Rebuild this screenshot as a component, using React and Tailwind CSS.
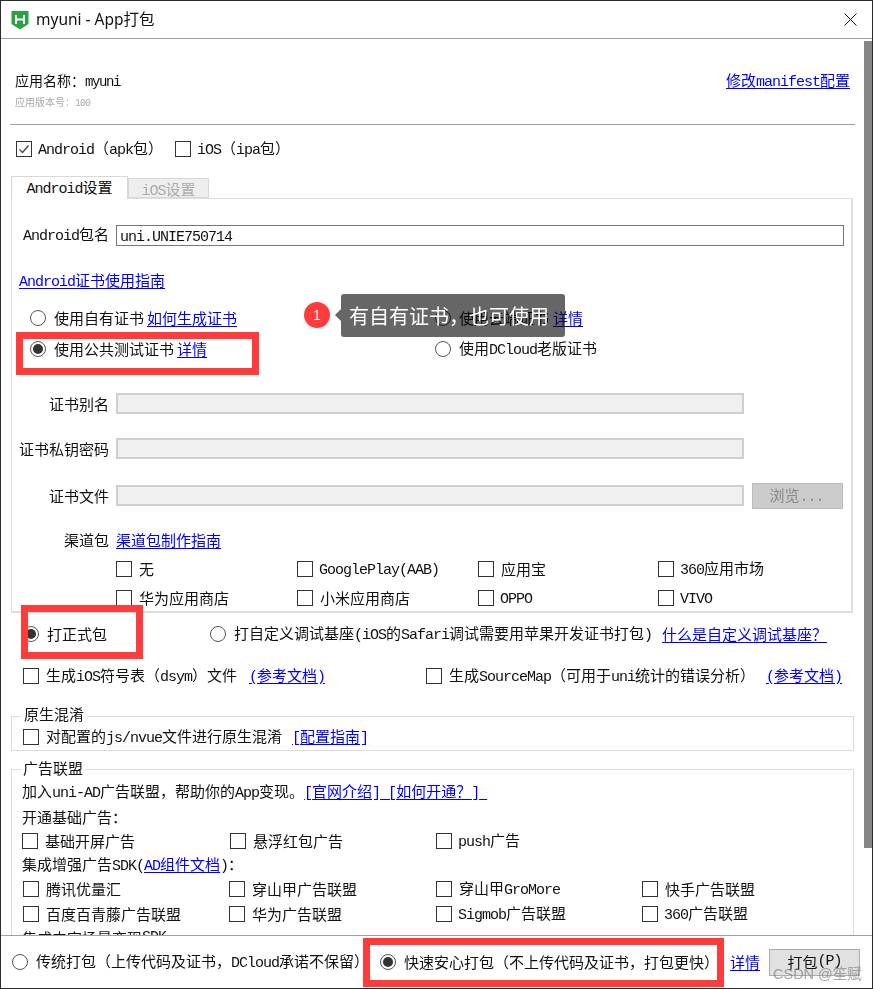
import React from "react";

function T({ children }) {
  const parts = String(children).split(/([\x20-\x7e]+)/).filter(Boolean);
  return (
    <>
      {parts.map((p, i) =>
        /^[\x20-\x7e]+$/.test(p) ? (
          <span key={i} className="font-['Liberation_Mono',monospace] text-[15px] tracking-[-1px] leading-[20px] whitespace-pre">{p}</span>
        ) : (
          <span key={i} className="font-['Noto_Sans_CJK_SC',sans-serif] text-[15px] leading-[20px] whitespace-pre">{p}</span>
        )
      )}
    </>
  );
}

function A({ children, className = "" }) {
  return <a className={"block leading-[20px] text-[#0000ff] underline underline-offset-2 whitespace-pre " + className}><T>{children}</T></a>;
}

function Check({ checked }) {
  return (
    <span className="w-4 h-4 shrink-0 border border-[#333] bg-white flex items-center justify-center">
      {checked && (
        <svg width="12" height="12" viewBox="0 0 12 12" fill="none" stroke="#444" strokeWidth="1.3">
          <path d="M1.5 6.5 L4.5 9.5 L10.5 2.5" />
        </svg>
      )}
    </span>
  );
}

function Radio({ on }) {
  return (
    <span className="w-4 h-4 shrink-0 rounded-full border-[1.5px] border-[#555] bg-white flex items-center justify-center">
      {on && <span className="w-[10px] h-[10px] rounded-full bg-[#333]" />}
    </span>
  );
}

function CheckItem({ label, width, checked, gap = "ml-[7px]" }) {
  return (
    <div className={"flex items-center h-5 " + width}>
      <Check checked={checked} />
      <span className={"leading-[20px] " + gap}><T>{label}</T></span>
    </div>
  );
}

function Label({ children }) {
  return <span className="w-[97px] mr-[7px] text-right leading-[20px]"><T>{children}</T></span>;
}

function Field({ label, mt }) {
  return (
    <div className={"flex items-center h-[21px] " + mt}>
      <Label>{label}</Label>
      <span className="w-[628px] h-[21px] bg-[#f0f0f0] border-2 border-[#cfcfcf]" />
    </div>
  );
}

export default function App() {
  return (
    <div className="relative w-[873px] h-[989px] bg-white border border-[#2a2a2a] flex flex-col overflow-hidden text-[#111]">
      <div className="h-[38px] shrink-0 border-b border-[#a0a0a0] flex items-center pl-[10px] pr-[15px]">
        <svg width="18" height="20" viewBox="0 0 18 20">
          <path d="M0.5 1 H17.5 V14 L9 19.5 L0.5 14 Z" fill="#2ba245" />
          <path d="M5 5 V14 M13 5 V14 M5 9.5 H13" stroke="#fff" strokeWidth="2" fill="none" />
        </svg>
        <span className="ml-[7px] font-['Noto_Sans','Noto_Sans_CJK_SC',sans-serif] text-[15.5px]">myuni - App打包</span>
        <svg className="ml-auto" width="13" height="13" viewBox="0 0 13 13" stroke="#111" strokeWidth="1" fill="none">
          <path d="M0.5 0.5 L12.5 12.5 M12.5 0.5 L0.5 12.5" />
        </svg>
      </div>

      <div className="relative flex-1 min-h-0 overflow-hidden">
        <div className="h-[85px] pt-[31px] pl-[14px] pr-[22px] flex justify-between items-start">
          <div>
            <div className="h-5 leading-[20px] whitespace-pre">
              <span className="font-['Noto_Sans_CJK_SC',sans-serif] text-[14px]">应用名称：</span>
              <span className="font-['Liberation_Mono',monospace] text-[14px] tracking-[-1.4px]">myuni</span>
            </div>
            <div className="mt-[2px] h-4 leading-4 text-[#aaa] whitespace-pre">
              <span className="font-['Noto_Sans_CJK_SC',sans-serif] text-[10px]">应用版本号：</span>
              <span className="font-['Liberation_Mono',monospace] text-[10px] tracking-[-1px]">100</span>
            </div>
          </div>
          <A>修改manifest配置</A>
        </div>
        <div className="h-px ml-[9px] w-[845px] bg-[#a0a0a0]" />

        <div className="h-[48px] pl-[15px] flex items-center">
          <CheckItem label="Android（apk包）" checked width="w-[159px]" gap="ml-[6px]" />
          <CheckItem label="iOS（ipa包）" gap="ml-[6px]" />
        </div>

        <div className="mt-[3px] ml-[10px] w-[843px] h-[22px] flex items-end">
          <div className="relative z-10 w-[117px] h-[23px] -mb-px border border-b-0 border-[#d8d8d8] bg-white text-center leading-[20px]"><T>Android设置</T></div>
          <div className="w-[81px] h-[20px] border border-[#d8d8d8] bg-[#eeeeee] text-center leading-[18px] text-[#aaa]"><T>iOS设置</T></div>
        </div>

        <div className="ml-[10px] w-[842px] h-[415px] border-2 border-[#dedede] border-t border-l bg-white">
          <div className="mt-[26px] flex items-center h-[21px]">
            <Label>Android包名</Label>
            <span className="w-[728px] h-[21px] border border-[#777] pl-[3px] leading-[19px]"><T>uni.UNIE750714</T></span>
          </div>
          <div className="mt-[25px] h-5 pl-[7px] flex items-center"><A>Android证书使用指南</A></div>

          <div className="mt-[17px] h-5 flex items-center">
            <div className="w-[423px] pl-[18px] flex items-center">
              <Radio />
              <span className="ml-2 leading-[20px]"><T>使用自有证书</T></span>
              <A className="ml-[3px]">如何生成证书</A>
            </div>
            <Radio />
            <span className="ml-2 leading-[20px]"><T>使用云端证书</T></span>
            <A className="ml-[4px]">详情</A>
          </div>
          <div className="mt-[11px] h-5 flex items-center">
            <div className="w-[423px] pl-[18px] flex items-center">
              <Radio on />
              <span className="ml-2 leading-[20px]"><T>使用公共测试证书</T></span>
              <A className="ml-[3px]">详情</A>
            </div>
            <Radio />
            <span className="ml-2 leading-[20px]"><T>使用DCloud老版证书</T></span>
          </div>

          <Field label="证书别名" mt="mt-[34px]" />
          <Field label="证书私钥密码" mt="mt-[24px]" />
          <div className="mt-[26px] flex items-center h-[21px]">
            <Label>证书文件</Label>
            <span className="w-[628px] h-[21px] bg-[#f0f0f0] border-2 border-[#cfcfcf]" />
            <span className="ml-2 w-[91px] h-[26px] shrink-0 bg-[#cccccc] border border-[#bbbbbb] text-[#888] flex items-center justify-center"><span className="mr-[2px]"><T>浏览...</T></span></span>
          </div>

          <div className="mt-[24px] h-5 flex items-center">
            <Label>渠道包</Label>
            <A>渠道包制作指南</A>
          </div>
          <div className="mt-[9px] pl-[104px] flex">
            <CheckItem label="无" width="w-[181px]" />
            <CheckItem label="GooglePlay(AAB)" width="w-[181px]" gap="ml-[6px]" />
            <CheckItem label="应用宝" width="w-[180px]" />
            <CheckItem label="360应用市场" gap="ml-[6px]" />
          </div>
          <div className="mt-[9px] pl-[104px] flex">
            <CheckItem label="华为应用商店" width="w-[181px]" />
            <CheckItem label="小米应用商店" width="w-[181px]" />
            <CheckItem label="OPPO" width="w-[180px]" gap="ml-[6px]" />
            <CheckItem label="VIVO" gap="ml-[6px]" />
          </div>
        </div>

        <div className="mt-[11px] h-5 pl-[22px] flex items-center">
          <div className="w-[187px] flex items-center">
            <Radio on />
            <span className="ml-2 leading-[20px]"><T>打正式包</T></span>
          </div>
          <Radio />
          <span className="ml-2 w-[428px] leading-[20px]"><T>打自定义调试基座(iOS的Safari调试需要用苹果开发证书打包)</T></span>
          <A>什么是自定义调试基座？</A>
        </div>

        <div className="mt-[22px] h-5 pl-[22px] flex items-center">
          <div className="w-[403px] flex items-center">
            <Check />
            <span className="ml-[7px] w-[203px] leading-[20px]"><T>生成iOS符号表（dsym）文件</T></span>
            <A>(参考文档)</A>
          </div>
          <Check />
          <span className="ml-[7px] w-[317px] leading-[20px]"><T>生成SourceMap（可用于uni统计的错误分析）</T></span>
          <A>(参考文档)</A>
        </div>

        <div className="relative mt-[30px] ml-[10px] w-[843px] h-[35px] border border-[#dcdcdc] pt-[10px] pl-[11px]">
          <span className="absolute left-[9px] -top-[13px] px-[3px] h-5 leading-[20px] bg-white"><T>原生混淆</T></span>
          <div className="h-5 flex items-center">
            <Check />
            <span className="ml-[7px] leading-[20px]"><T>对配置的js/nvue文件进行原生混淆</T></span>
            <A className="ml-[10px]">[配置指南]</A>
          </div>
        </div>

        <div className="relative mt-[18px] ml-[10px] w-[843px] h-[200px] border border-[#dcdcdc] pt-[12px] pl-[10px]">
          <span className="absolute left-[9px] -top-[12px] px-[2px] h-5 leading-[20px] bg-white"><T>广告联盟</T></span>
          <div className="h-5 flex items-center">
            <span className="leading-[20px]"><T>加入uni-AD广告联盟，帮助你的App变现。</T></span>
            <A>[官网介绍] [如何开通？] </A>
          </div>
          <div className="mt-[5px] h-5 flex items-center"><T>开通基础广告：</T></div>
          <div className="mt-[4px] flex">
            <CheckItem label="基础开屏广告" width="w-[208px]" />
            <CheckItem label="悬浮红包广告" width="w-[206px]" />
            <CheckItem label="push广告" gap="ml-[6px]" />
          </div>
          <div className="mt-[4px] h-5 flex items-center">
            <span className="leading-[20px]"><T>集成增强广告SDK(</T></span>
            <A>AD组件文档</A>
            <span className="leading-[20px]"><T>)：</T></span>
          </div>
          <div className="mt-[4px] pl-[1px] flex">
            <CheckItem label="腾讯优量汇" width="w-[206px]" />
            <CheckItem label="穿山甲广告联盟" width="w-[207px]" />
            <CheckItem label="穿山甲GroMore" width="w-[206px]" />
            <CheckItem label="快手广告联盟" />
          </div>
          <div className="mt-[5px] pl-[1px] flex">
            <CheckItem label="百度百青藤广告联盟" width="w-[206px]" />
            <CheckItem label="华为广告联盟" width="w-[207px]" />
            <CheckItem label="Sigmob广告联盟" width="w-[206px]" gap="ml-[6px]" />
            <CheckItem label="360广告联盟" gap="ml-[6px]" />
          </div>
          <div className="mt-[4px] h-5 flex items-center"><T>集成内容场景变现SDK</T></div>
        </div>

        <div className="absolute right-0 top-[2px] w-2 h-[807px] bg-[#868686]" />
      </div>

      <div className="h-[53px] shrink-0 border-t border-[#a0a0a0] pl-[11px] flex items-center">
        <div className="w-[368px] flex items-center">
          <Radio />
          <span className="ml-2 leading-[20px]"><T>传统打包（上传代码及证书，DCloud承诺不保留）</T></span>
        </div>
        <div className="w-[350px] flex items-center">
          <Radio on />
          <span className="ml-2 leading-[20px]"><T>快速安心打包（不上传代码及证书，打包更快）</T></span>
        </div>
        <div className="w-[39px]"><A>详情</A></div>
        <div className="w-[91px] h-[27px] bg-[#e1e1e1] border border-[#adadad] flex items-center justify-center"><T>打包(P)</T></div>
      </div>

      <div className="absolute left-[15px] top-[331px] w-[243px] h-[43px] border-[7px] border-[#ff3b3b]" />
      <div className="absolute left-[20px] top-[604px] w-[122px] h-[54px] border-[7px] border-[#ff3b3b]" />
      <div className="absolute left-[362px] top-[937px] w-[361px] h-[49px] border-[7px] border-[#ff3b3b]" />

      <div className="absolute left-[303px] top-[301px] w-[26px] h-[26px] rounded-full bg-[#ff3b3b] text-white text-[14px] font-['Liberation_Sans',sans-serif] flex items-center justify-center">1</div>
      <div className="absolute left-[334px] top-[308px] w-0 h-0 border-y-[6px] border-y-transparent border-r-[6px] border-r-[#666]" />
      <div className="absolute left-[340px] top-[293px] w-[224px] h-[43px] rounded-[3px] bg-[#666] mix-blend-multiply" />
      <div className="absolute left-[348px] top-[293px] h-[43px] flex items-center text-white text-[20px] font-['Noto_Sans_CJK_SC',sans-serif] whitespace-pre">有自有证书，也可使用</div>

      <div className="absolute left-[772px] top-[963px] text-[14.5px] leading-[20px] text-[#808080]/70 font-['Liberation_Sans','Noto_Sans_CJK_SC',sans-serif] whitespace-pre">CSDN @笙赋</div>
    </div>
  );
}
